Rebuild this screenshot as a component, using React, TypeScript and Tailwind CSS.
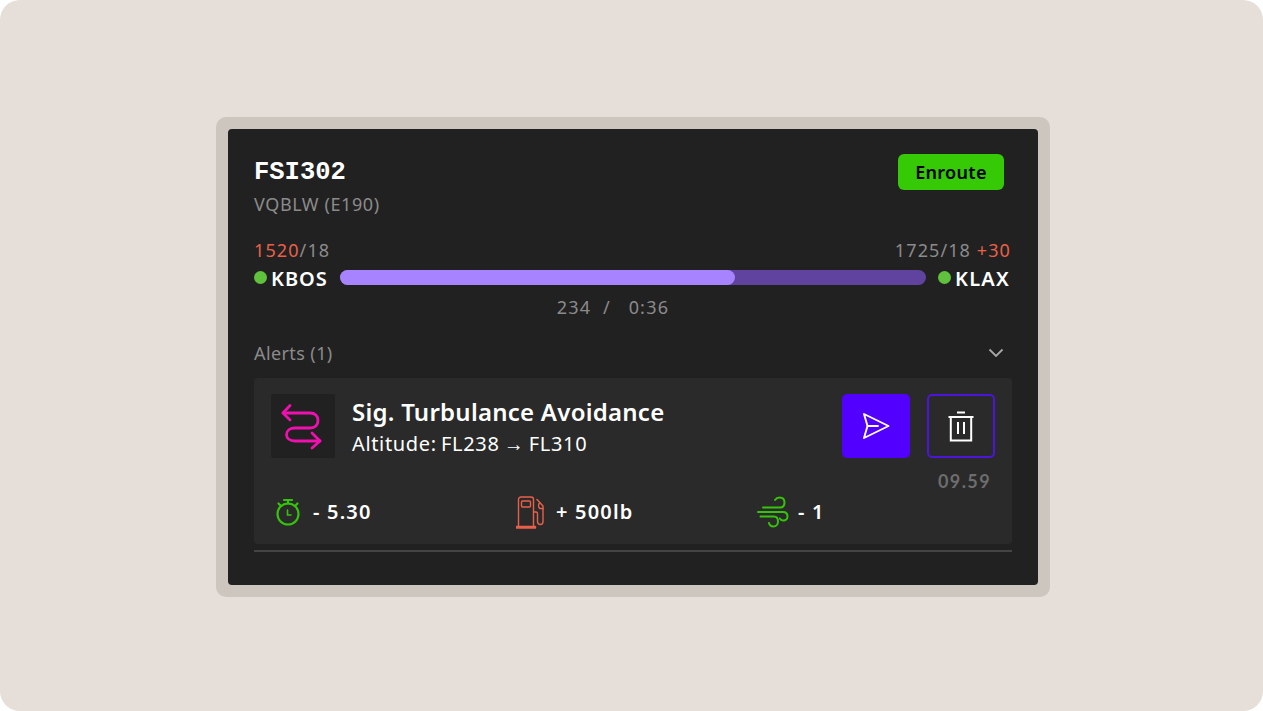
import React from "react";

const sans = "font-['Noto_Sans','Roboto',sans-serif]";

function Route() {
  return (
    <svg width="64" height="64" viewBox="0 0 64 64" fill="none" stroke="#f010b0" strokeWidth="2.800" strokeLinecap="round" strokeLinejoin="round">
      <path d="M19 11.500 L12 19 L19 26" />
      <path d="M12 19 H39 C44 19 47 22 47 26.500 C47 31 44 34 39 34 H24 C19 34 15.500 36.500 15.500 40.500 C15.500 44.500 19 47 24 47 H49" />
      <path d="M41 39 L49 47 L41 54" />
    </svg>
  );
}

function Send() {
  return (
    <svg width="28" height="28" viewBox="0 0 28 28" fill="none" stroke="#fff" strokeWidth="1.900" strokeLinejoin="round" strokeLinecap="round">
      <path d="M2 2 L26.500 14 L2 26 L5.500 14 Z" />
      <path d="M5.500 14 H16" />
    </svg>
  );
}

function Trash() {
  return (
    <svg width="26" height="31" viewBox="0 0 26 31" fill="none" stroke="#fff" strokeWidth="2">
      <path d="M9 1.500 H17" />
      <path d="M0.500 6 H25.500" />
      <path d="M2.800 6 V29.500 H23.200 V6" />
      <path d="M10 11 V23 M16 11 V23" />
    </svg>
  );
}

function Timer() {
  return (
    <svg width="26" height="28" viewBox="0 0 26 28" fill="none" stroke="#35c40b" strokeWidth="2.200" strokeLinecap="round">
      <circle cx="13" cy="16" r="10.500" />
      <path d="M9 2 H17 M13 2 V5.500 M3.500 5.500 L6 8 M22.500 5.500 L20 8" />
      <path d="M12.500 12 V17 H16" strokeWidth="1.600" />
    </svg>
  );
}

function Fuel() {
  return (
    <svg width="28" height="33" viewBox="0 0 28 33" fill="none" stroke="#e9604a" strokeWidth="1.400" strokeLinejoin="round" strokeLinecap="round">
      <path d="M2.500 30 V3.500 C2.500 2 3.500 1 5 1 H15 C16.500 1 17.500 2 17.500 3.500 V30" />
      <rect x="5.500" y="5" width="9" height="6" rx="1" />
      <path d="M0.500 30.500 H19.500 V32 H0.500 Z" />
      <path d="M17.500 16 H20 C21 16 21.500 17 21.500 18 V25.500 C21.500 27.500 23 28.500 24.500 28.500 C26 28.500 27 27 27 25.500 V10 L21 3.500" />
      <path d="M24 7 C22 8 22 11.500 24 12.500 H27" />
    </svg>
  );
}

function Wind() {
  return (
    <svg width="32" height="32" viewBox="0 0 32 32" fill="none" stroke="#35c40b" strokeWidth="2" strokeLinecap="round">
      <path d="M6 11.500 H23 C26 11.500 27.500 9.500 27.500 6.500 C27.500 3.500 25.500 1.500 22.500 1.500 C20.500 1.500 19 2.500 18 4" />
      <path d="M1 16 H26 C29 16 30.500 18 30.500 20.500 C30.500 23 28.500 24.500 26.500 24.500 C25 24.500 23.500 23.800 23 22.500" />
      <path d="M3.500 20.500 H17 C19.500 20.500 21 22.500 21 25.500 C21 28.500 19 30.500 16.500 30.500 C14 30.500 12.500 29 12 27" />
    </svg>
  );
}

function Metric({ icon, value, wide }: { icon: React.ReactNode; value: string; wide: string }) {
  return (
    <div className={`flex items-center ${wide}`}>
      {icon}
      <span className="text-[20px] leading-[24px] font-semibold text-white tracking-[1.200px]">{value}</span>
    </div>
  );
}

export default function App() {
  return (
    <div className="w-[1263px] h-[711px] bg-white overflow-hidden">
      <div className={`w-full h-full bg-[#e6ded8] rounded-[20px] pl-[216px] pt-[117px] ${sans}`}>
        <div className="w-[834px] h-[480px] rounded-[10px] bg-[#cdc6bf] p-3">
          <div className="w-[810px] h-[456px] rounded-[4px] bg-[#212121] px-[26px] pt-[26px]">
            <div className="flex justify-between items-start">
              <div>
                <div className="font-['Liberation_Mono',monospace] font-bold text-[25.500px] leading-[36px] text-white">FSI302</div>
                <div className="text-[18px] leading-[24px] mt-[1px] text-[#8b8b8b] tracking-[0.6px]">VQBLW (E190)</div>
              </div>
              <div className="w-[106px] h-[36px] -mt-[1px] mr-[8px] bg-[#35c906] rounded-[6px] flex items-center justify-center text-[18px] font-semibold text-black tracking-[0.3px]">
                Enroute
              </div>
            </div>

            <div className="flex justify-between text-[18px] leading-[24px] mt-[22px] text-[#8b8b8b] tracking-[1.100px] pr-[1px]">
              <div><span className="text-[#e9604a]">1520</span>/18</div>
              <div>1725/18 <span className="text-[#e9604a]">+30</span></div>
            </div>

            <div className="flex items-center h-[22px] mt-[5px]">
              <div className="w-[13px] h-[13px] rounded-full bg-[#5fc13c] -mt-[2px]" />
              <div className="ml-[4px] w-[69px] text-[20px] leading-[22px] font-semibold text-white tracking-[1px] mt-[2px]">KBOS</div>
              <div className="w-[586px] h-[15px] rounded-full bg-[#60439f] -mt-[2px]">
                <div className="w-[395px] h-[15px] rounded-full bg-[#a883ff]" />
              </div>
              <div className="w-[13px] h-[13px] rounded-full bg-[#5fc13c] ml-[12px] -mt-[2px]" />
              <div className="ml-[4px] text-[20px] leading-[22px] font-semibold text-white tracking-[1.200px] mt-[2px]">KLAX</div>
            </div>

            <div className="text-center pr-[40px] text-[18px] leading-[24px] mt-[6px] text-[#8b8b8b] whitespace-pre tracking-[1.200px]">234  /   0:36</div>

            <div className="flex justify-between items-center mt-[22px] h-[24px]">
              <span className="text-[18px] text-[#8b8b8b] tracking-[0.4px]">Alerts (1)</span>
              <svg className="mr-[8px]" width="16" height="10" viewBox="0 0 16 10" fill="none" stroke="#a8a8a8" strokeWidth="1.800">
                <path d="M1.500 1.500 L8 8 L14.500 1.500" />
              </svg>
            </div>

            <div className="w-[758px] h-[166px] mt-[13px] rounded-[4px] bg-[#2a2a2a] pt-[16px] px-[17px]">
              <div className="flex h-[64px]">
                <div className="w-[64px] h-[64px] rounded-[2px] bg-[#212121]">
                  <Route />
                </div>
                <div className="ml-[17px] flex-1">
                  <div className="text-[24px] leading-[36px] font-semibold text-white tracking-[0.25px]">Sig. Turbulance Avoidance</div>
                  <div className="text-[20px] leading-[26px] text-white mt-[1px] tracking-[0.65px] [word-spacing:-1.500px]">Altitude: FL238 → FL310</div>
                </div>
                <div className="w-[68px] h-[64px] rounded-[5px] bg-[#5200ff] flex items-center justify-center">
                  <Send />
                </div>
                <div className="w-[68px] h-[64px] ml-[17px] rounded-[5px] border-2 border-[#4d14d9] flex items-center justify-center">
                  <Trash />
                </div>
              </div>
              <div className="text-[18px] leading-[24px] mt-[11px] font-bold text-[#6d6d6d] font-['Lato',sans-serif] flex justify-end pr-[4px] tracking-[1.400px]">09.59</div>
              <div className="flex items-center h-[34px] mt-[2px] pl-[4px]">
                <Metric wide="w-[241px] gap-[12px]" icon={<Timer />} value="- 5.30" />
                <Metric wide="w-[241px] gap-[12px]" icon={<Fuel />} value="+ 500lb" />
                <Metric wide="gap-[9px]" icon={<Wind />} value="- 1" />
              </div>
            </div>
            <div className="w-[758px] h-[2px] mt-[6px] bg-[#444444]" />
          </div>
        </div>
      </div>
    </div>
  );
}
